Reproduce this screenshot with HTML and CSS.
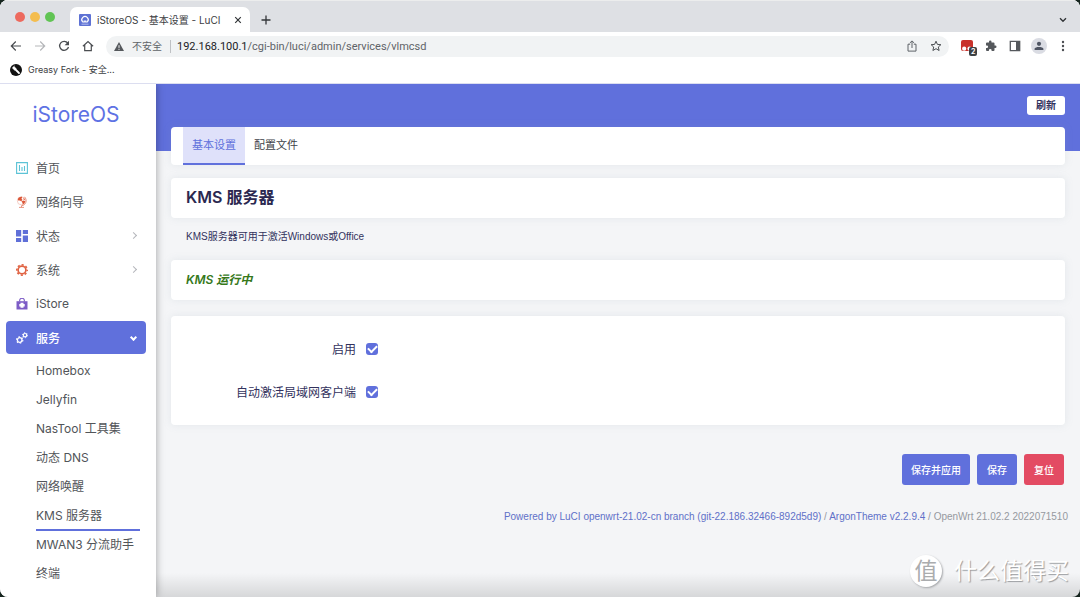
FILE: index.html
```
<!DOCTYPE html>
<html lang="zh-CN">
<head>
<meta charset="utf-8">
<meta name="viewport" content="width=device-width, initial-scale=1">
<title>iStoreOS - 基本设置 - LuCI</title>
<link rel="stylesheet" href="styles.css">
</head>
<body>
<div class="window">
  <header class="chrome">
    <div class="tabstrip">
      <div class="lights"><i class="light red"></i><i class="light amber"></i><i class="light green"></i></div>
      <div class="tab">
        <svg class="favicon" viewBox="0 0 12 12"><rect width="12" height="12" rx="1" fill="#5e72d4"/><path d="M3.5 7.700A3.200 3.200 0 1 1 8.500 7.700M3.300 8h2V6.400M8.700 8h-2V6.400" fill="none" stroke="#fff" stroke-width="1.200"/><path d="M2.500 10.200h7" stroke="#c5ccf4" stroke-width=".8"/></svg>
        <span class="tab-title">iStoreOS - 基本设置 - LuCI</span>
        <button class="icon-button" aria-label="关闭标签页"><svg width="8" height="8" viewBox="0 0 8 8"><path d="M1.2 1.2l5.6 5.6M6.8 1.2L1.2 6.8" stroke="#333639" stroke-width="1.2"/></svg></button>
      </div>
      <button class="icon-button new-tab" aria-label="新标签页"><svg width="10" height="10" viewBox="0 0 10 10"><path d="M5 .5v9M.5 5h9" stroke="#333639" stroke-width="1.3"/></svg></button>
      <button class="icon-button tab-search" aria-label="搜索标签页"><svg width="8" height="6" viewBox="0 0 8 6"><path d="M1 1.2l3 3 3-3" fill="none" stroke="#333639" stroke-width="1.4"/></svg></button>
    </div>
    <div class="toolbar">
      <button class="icon-button" aria-label="后退"><svg width="12" height="12" viewBox="0 0 12 12"><path d="M11 6H1.5M5.8 1.5L1.3 6l4.5 4.5" fill="none" stroke="#4b4e52" stroke-width="1.2"/></svg></button>
      <button class="icon-button" aria-label="前进"><svg width="12" height="12" viewBox="0 0 12 12"><path d="M1 6h9.5M6.2 1.5L10.7 6l-4.5 4.5" fill="none" stroke="#b5b7ba" stroke-width="1.2"/></svg></button>
      <button class="icon-button" aria-label="重新加载"><svg width="12" height="12" viewBox="0 0 12 12"><path d="M9.8 3.2A4.5 4.5 0 1 0 10.5 7" fill="none" stroke="#4b4e52" stroke-width="1.3"/><path d="M11 .8v4.400H6.600z" fill="#4b4e52"/></svg></button>
      <button class="icon-button" aria-label="主页"><svg width="12" height="12" viewBox="0 0 12 12"><path d="M.9 6.3L6 1.6l5.1 4.7M2.7 5v5.600h6.600V5" fill="none" stroke="#4b4e52" stroke-width="1.2"/></svg></button>
      <div class="address">
        <svg width="10" height="9" viewBox="0 0 10 9"><path d="M5 0l5 9H0z" fill="#55585c"/><path d="M5 3.2v2.7M5 6.8v1.1" stroke="#f1f3f4" stroke-width="1"/></svg>
        <span class="insecure">不安全</span>
        <span class="url"><b>192.168.100.1</b>/cgi-bin/luci/admin/services/vlmcsd</span>
        <button class="icon-button" aria-label="分享"><svg width="12" height="12" viewBox="0 0 12 12"><path d="M4.2 4.2H2v6.900h8V4.200H7.800M6 8V1.200M3.800 3L6 .9 8.200 3" fill="none" stroke="#5f6368" stroke-width="1"/></svg></button>
        <button class="icon-button" aria-label="收藏"><svg width="12" height="12" viewBox="0 0 12 12"><path d="M6 1.2l1.4 3.200 3.500.3-2.600 2.300.8 3.500L6 8.700l-3.100 1.800.8-3.500L1.100 4.700l3.500-.3z" fill="none" stroke="#4b4e52" stroke-width="1"/></svg></button>
      </div>
      <button class="icon-button extension" aria-label="扩展"><svg width="12" height="12" viewBox="0 0 12 12"><path d="M2 0h8a2 2 0 0 1 2 2v9H2a2 2 0 0 1-2-2V2a2 2 0 0 1 2-2z" fill="#c8322b"/><circle cx="3.200" cy="8.700" r="2.100" fill="#fff"/><circle cx="8.500" cy="8.700" r="2.100" fill="#fff"/></svg><span class="count">2</span></button>
      <button class="icon-button" aria-label="扩展程序"><svg width="12" height="12" viewBox="0 0 24 24"><path d="M20.500 11H19V7a2 2 0 0 0-2-2h-4V3.500a2.500 2.500 0 0 0-5 0V5H4a2 2 0 0 0-2 2v3.800h1.500a2.700 2.700 0 0 1 0 5.400H2V20a2 2 0 0 0 2 2h3.800v-1.500a2.700 2.700 0 0 1 5.400 0V22H17a2 2 0 0 0 2-2v-4h1.500a2.500 2.500 0 0 0 0-5z" fill="#55585c"/></svg></button>
      <button class="icon-button" aria-label="侧边栏"><svg width="12" height="12" viewBox="0 0 12 12"><path d="M1.300 1.300h9.400v9.400H1.300z" fill="none" stroke="#55585c" stroke-width="1.300"/><path d="M7 1h4v10H7z" fill="#55585c"/></svg></button>
      <button class="icon-button profile" aria-label="个人资料"><svg width="16" height="16" viewBox="0 0 16 16"><circle cx="8" cy="8" r="8" fill="#dadce3"/><circle cx="8" cy="5.800" r="2.100" fill="#4f5563"/><path d="M3.600 12V10.800C3.600 9.400 6 8.900 8 8.900s4.400.5 4.400 1.900V12z" fill="#4f5563"/></svg></button>
      <button class="icon-button" aria-label="菜单"><svg width="12" height="12" viewBox="0 0 12 12" fill="#4b4e52"><circle cx="6" cy="2" r="1.200"/><circle cx="6" cy="6" r="1.200"/><circle cx="6" cy="10" r="1.200"/></svg></button>
    </div>
    <nav class="bookmarks">
      <a href="#"><svg width="12" height="12" viewBox="0 0 12 12"><circle cx="6" cy="6" r="6" fill="#111"/><path d="M5.500 5.500L9 9" stroke="#fff" stroke-width="1.800" stroke-linecap="round"/><path d="M2.300 4.100l1.600-1.800 2.400 2.400-1.600 1.600zM3.900 2.300l.7-.6" fill="#fff" stroke="#fff" stroke-width=".5"/></svg>Greasy Fork - 安全...</a>
    </nav>
  </header>

  <div class="page">
    <aside class="sidebar">
      <a class="brand" href="#">iStoreOS</a>
      <ul class="menu">
        <li><a class="entry" href="#"><svg viewBox="0 0 12 12" fill="none" stroke="#5cc3d6"><path d="M.600.600h10.800v10.800H.600zM3.500 3v6M6 5v4M8.500 4v5" stroke-width="1.100"/></svg>首页</a></li>
        <li><a class="entry" href="#"><svg viewBox="0 0 12 12"><circle cx="5.300" cy="4.800" r="4" fill="#fff" stroke="#eba18e" stroke-width=".5"/><path d="M1.800 3C3 .8 5 .4 6.300 1L5.500 2.700 6.600 4 5 5.200 4 4.400 2.200 4.600zM5.400 5.500l2.200-.9L9.300 5.300C9 7.300 7.500 8.500 6.500 8.600L6.600 7zM7.300 1.500L9.300 3.900 7.600 3.700z" fill="#dc5738"/><path d="M8.500.8C11.700 4 10 9.500 5.500 9.700M5.500 9.700v1.500M3 11.400h5" fill="none" stroke="#e27b62" stroke-width=".8"/></svg>网络向导</a></li>
        <li><a class="entry" href="#"><svg viewBox="0 0 12 12" fill="#6070d8"><path d="M0 0h5.200v6.500H0zM0 8h5.200v4H0zM6.800 0H12v4H6.800zM6.800 5.500H12V12H6.800z"/></svg>状态<i class="arrow"></i></a></li>
        <li><a class="entry" href="#"><svg viewBox="0 0 12 12" fill="none" stroke="#e06343"><circle cx="6" cy="6" r="3.900" stroke-width="1.700"/><circle cx="6" cy="6" r="5.200" stroke-width="1.600" stroke-dasharray="2.100 1.984" stroke-dashoffset="1.050"/></svg>系统<i class="arrow"></i></a></li>
        <li><a class="entry" href="#"><svg viewBox="0 0 12 12"><path d="M.5 3.200h11v8.300H.5z" fill="#7d5cc6"/><path d="M3.600 3.500V2.700a2.400 2.400 0 0 1 4.800 0v.8" fill="none" stroke="#7d5cc6" stroke-width="1.100"/><path d="M4.500 4.800h3v1.100h1.200v2.700H7.500v1.100h-3V8.600H3.300V5.900h1.200z" fill="#fff"/></svg>iStore</a></li>
        <li>
          <a class="entry active" href="#"><svg viewBox="0 0 12 12" fill="none" stroke="#fff"><circle cx="3.700" cy="8" r="2.300" stroke-width="1.300"/><circle cx="3.700" cy="8" r="3.200" stroke-width="1.100" stroke-dasharray="1.500 1.851"/><circle cx="9" cy="3.200" r="1.700" stroke-width="1.200"/><circle cx="9" cy="3.200" r="2.500" stroke-width="1" stroke-dasharray="1.200 1.418"/></svg>服务<i class="arrow down"></i></a>
          <ul class="submenu">
            <li><a href="#">Homebox</a></li>
            <li><a href="#">Jellyfin</a></li>
            <li><a href="#">NasTool 工具集</a></li>
            <li><a href="#">动态 DNS</a></li>
            <li><a href="#">网络唤醒</a></li>
            <li><a class="current" href="#">KMS 服务器</a></li>
            <li><a href="#">MWAN3 分流助手</a></li>
            <li><a href="#">终端</a></li>
          </ul>
        </li>
      </ul>
    </aside>

    <div class="content">
      <div class="banner"><button class="refresh">刷新</button></div>
      <main class="main">
        <nav class="card tabs"><a class="selected" href="#">基本设置</a><a href="#">配置文件</a></nav>
        <h1 class="card heading">KMS 服务器</h1>
        <p class="description">KMS服务器可用于激活Windows或Office</p>
        <div class="card status"><em>KMS 运行中</em></div>
        <form class="settings">
          <div class="card fields">
            <div class="field"><label for="enabled">启用</label><input type="checkbox" id="enabled" checked></div>
            <div class="field"><label for="autoactivate">自动激活局域网客户端</label><input type="checkbox" id="autoactivate" checked></div>
          </div>
          <div class="actions">
            <button class="action" type="button">保存并应用</button>
            <button class="action" type="button">保存</button>
            <button class="action reset" type="reset">复位</button>
          </div>
        </form>
        <footer class="footer"><a href="#">Powered by LuCI openwrt-21.02-cn branch (git-22.186.32466-892d5d9)</a> / <a href="#">ArgonTheme v2.2.9.4</a> / OpenWrt 21.02.2 2022071510</footer>
      </main>
    </div>
  </div>
  <div class="shade"></div>
  <div class="watermark"><span class="seal">值</span><span>什么值得买</span></div>
</div>
</body>
</html>
```
FILE: styles.css
```
* { box-sizing: border-box; }

body {
  margin: 0;
  background: #16251f;
  font-family: Inter, "Noto Sans CJK SC", sans-serif;
  font-size: 12px;
  color: #32325d;
}

a { color: inherit; text-decoration: none; }
ul { margin: 0; padding: 0; list-style: none; }
button { font: inherit; border: 0; cursor: pointer; }
svg { display: block; flex: none; }

.window {
  position: relative;
  display: flex;
  flex-direction: column;
  height: 100vh;
  overflow: hidden;
  border-radius: 8px;
  background: #f4f5f7;
}

/* Browser chrome */
.chrome { background: #fff; border-bottom: 1px solid #dcdef0; color: #3c4043; }
.icon-button { display: flex; padding: 0; background: none; flex: none; }

.tabstrip {
  display: flex;
  align-items: center;
  height: 32px;
  padding: 0 13px 0 15px;
  background: #dee0e4;
  border-top: 1px solid #eceded;
}
.lights { display: flex; gap: 5px; margin-right: 15px; }
.light { width: 10px; height: 10px; border-radius: 50%; }
.red { background: #ed6a5e; }
.amber { background: #f4bd4f; }
.green { background: #61c454; }
.tab {
  display: flex;
  align-items: center;
  align-self: flex-end;
  gap: 6px;
  width: 180px;
  height: 25px;
  padding: 0 8px 0 9px;
  border-radius: 7px 7px 0 0;
  background: #fff;
}
.favicon { width: 12px; height: 12px; }
.tab-title { flex: 1; font-size: 10px; white-space: nowrap; }
.new-tab { margin: 6px 0 0 11px; }
.tab-search { margin: 6px 0 0 auto; }

.toolbar {
  display: flex;
  align-items: center;
  gap: 12px;
  height: 28px;
  padding: 0 11px 0 10px;
}
.address {
  display: flex;
  align-items: center;
  flex: 1;
  gap: 8px;
  height: 21px;
  padding: 0 7px 0 8px;
  border-radius: 11px;
  background: #f1f3f4;
  font-family: Roboto, "Noto Sans CJK SC", sans-serif;
  font-size: 11px;
  color: #5f6368;
}
.address > .icon-button + .icon-button { margin-left: 4px; }
.insecure { font-size: 10px; line-height: 13px; }
.url { flex: 1; padding-left: 6px; border-left: 1px solid #bfc1c4; line-height: 13px; }
.url b { font-weight: 400; color: #202124; }
.extension { position: relative; }
.profile { margin: 0 -2px; }
.count {
  position: absolute;
  left: 8px;
  top: 7px;
  padding: 0 2px;
  border-radius: 2px;
  background: #3c4043;
  color: #fff;
  font-size: 7px;
  font-weight: 700;
  line-height: 9px;
}

.bookmarks { height: 23px; padding: 4px 10px; font-size: 9px; }
.bookmarks a { display: inline-flex; align-items: center; gap: 6px; line-height: 12px; }

/* Router page */
.page { display: flex; flex: 1; min-height: 0; }
.sidebar {
  flex: none;
  width: 156px;
  padding: 15px 10px 0 6px;
  background: #fff;
  box-shadow: 0 0 8px rgba(0, 0, 0, .35);
  clip-path: inset(0 -12px 0 0);
  z-index: 1;
  color: #525559;
}
.brand {
  display: block;
  margin-bottom: 20px;
  text-align: center;
  font-size: 21px;
  line-height: 32px;
  color: #5e72e4;
}
.menu { display: flex; flex-direction: column; gap: 1px; }
.entry {
  display: flex;
  align-items: center;
  gap: 8px;
  height: 33px;
  padding: 0 8px 0 10px;
  border-radius: 4px;
}
.entry svg { width: 12px; height: 12px; }
.entry.active { background: #6070dc; color: #fff; font-weight: 500; }
.arrow {
  width: 5px;
  height: 5px;
  margin-left: auto;
  margin-right: 2px;
  border: solid #b4b6bb;
  border-width: 1px 1px 0 0;
  transform: rotate(45deg);
}
.arrow.down { border-color: #fff; border-width: 2px 2px 0 0; transform: rotate(135deg); }
.submenu { padding: 3px 6px 0 30px; }
.submenu a { display: block; height: 29px; line-height: 28px; white-space: nowrap; }
.submenu .current { border-bottom: 2px solid #6070dc; }

.content { flex: 1; min-width: 0; }
.banner {
  display: flex;
  justify-content: flex-end;
  align-items: flex-start;
  height: 67px;
  margin-bottom: -24px;
  padding: 12px 15px;
  background: #6070dc;
}
.refresh {
  height: 19px;
  padding: 0 9px;
  border-radius: 3px;
  background: #fff;
  color: #32325d;
  font-size: 10px;
  font-weight: 700;
  line-height: 19px;
}
.main { position: relative; padding: 0 15px; }
.card {
  margin: 0;
  border-radius: 4px;
  background: #fff;
  box-shadow: 0 0 8px rgba(136, 152, 170, .15);
}
.tabs { display: flex; height: 38px; padding: 0 12px; margin-bottom: 13px; font-size: 11px; color: #404249; }
.tabs a { padding: 0 9px; line-height: 36px; }
.tabs .selected { background: #dfe1fa; border-bottom: 2px solid #6070dc; color: #6070dc; }
.heading { height: 40px; padding: 0 15px; font-size: 16px; font-weight: 600; line-height: 38px; color: #2b2850; }
.description { margin: 0; padding: 0 15px; font-family: "Liberation Sans", "Noto Sans CJK SC", sans-serif; font-size: 10px; line-height: 38px; height: 42px; }
.status { margin-bottom: 16px; padding: 0 15px; font-weight: 600; line-height: 40px; color: #36781b; }
.fields { display: grid; gap: 11px; padding: 17px 0; }
.field { display: flex; align-items: center; height: 32px; }
.field label { width: 185px; padding-bottom: 2px; text-align: right; }
.field input {
  appearance: none;
  display: grid;
  place-items: center;
  width: 12px;
  height: 12px;
  margin: 0 0 0 10px;
  border-radius: 3px;
  background: #6070dc;
}
.field input::before {
  content: "";
  width: 7px;
  height: 4px;
  margin-bottom: 2px;
  border: solid #fff;
  border-width: 0 0 2px 2px;
  transform: rotate(-45deg);
}
.actions { display: flex; justify-content: flex-end; gap: 7px; padding: 29px 1px 25px 0; }
.action {
  min-width: 40px;
  height: 31px;
  padding: 0 9px;
  border-radius: 3px;
  background: #6070dc;
  color: #fff;
  font-size: 10px;
  font-weight: 500;
}
.reset { background: #e34b63; }
.footer { margin-right: -3px; text-align: right; font-family: "Liberation Sans", "Noto Sans CJK SC", sans-serif; font-size: 10px; line-height: 14px; color: #96999f; white-space: nowrap; }
.footer a { color: #6070c8; }

.shade {
  position: absolute;
  inset: auto 0 0 0;
  height: 24px;
  background: linear-gradient(transparent, rgba(0, 0, 0, .12));
  pointer-events: none;
}
.watermark {
  position: absolute;
  right: 11px;
  bottom: 10px;
  display: flex;
  align-items: center;
  gap: 12px;
  color: #fff;
  font-size: 23px;
  line-height: 32px;
  text-shadow: 1px 1px 1px #9a9c9f;
}
.seal {
  width: 32px;
  height: 32px;
  border-radius: 50%;
  background: #fff;
  box-shadow: 1px 1px 2px #a5a7aa;
  color: #aaacae;
  text-align: center;
  text-shadow: none;
}
```
